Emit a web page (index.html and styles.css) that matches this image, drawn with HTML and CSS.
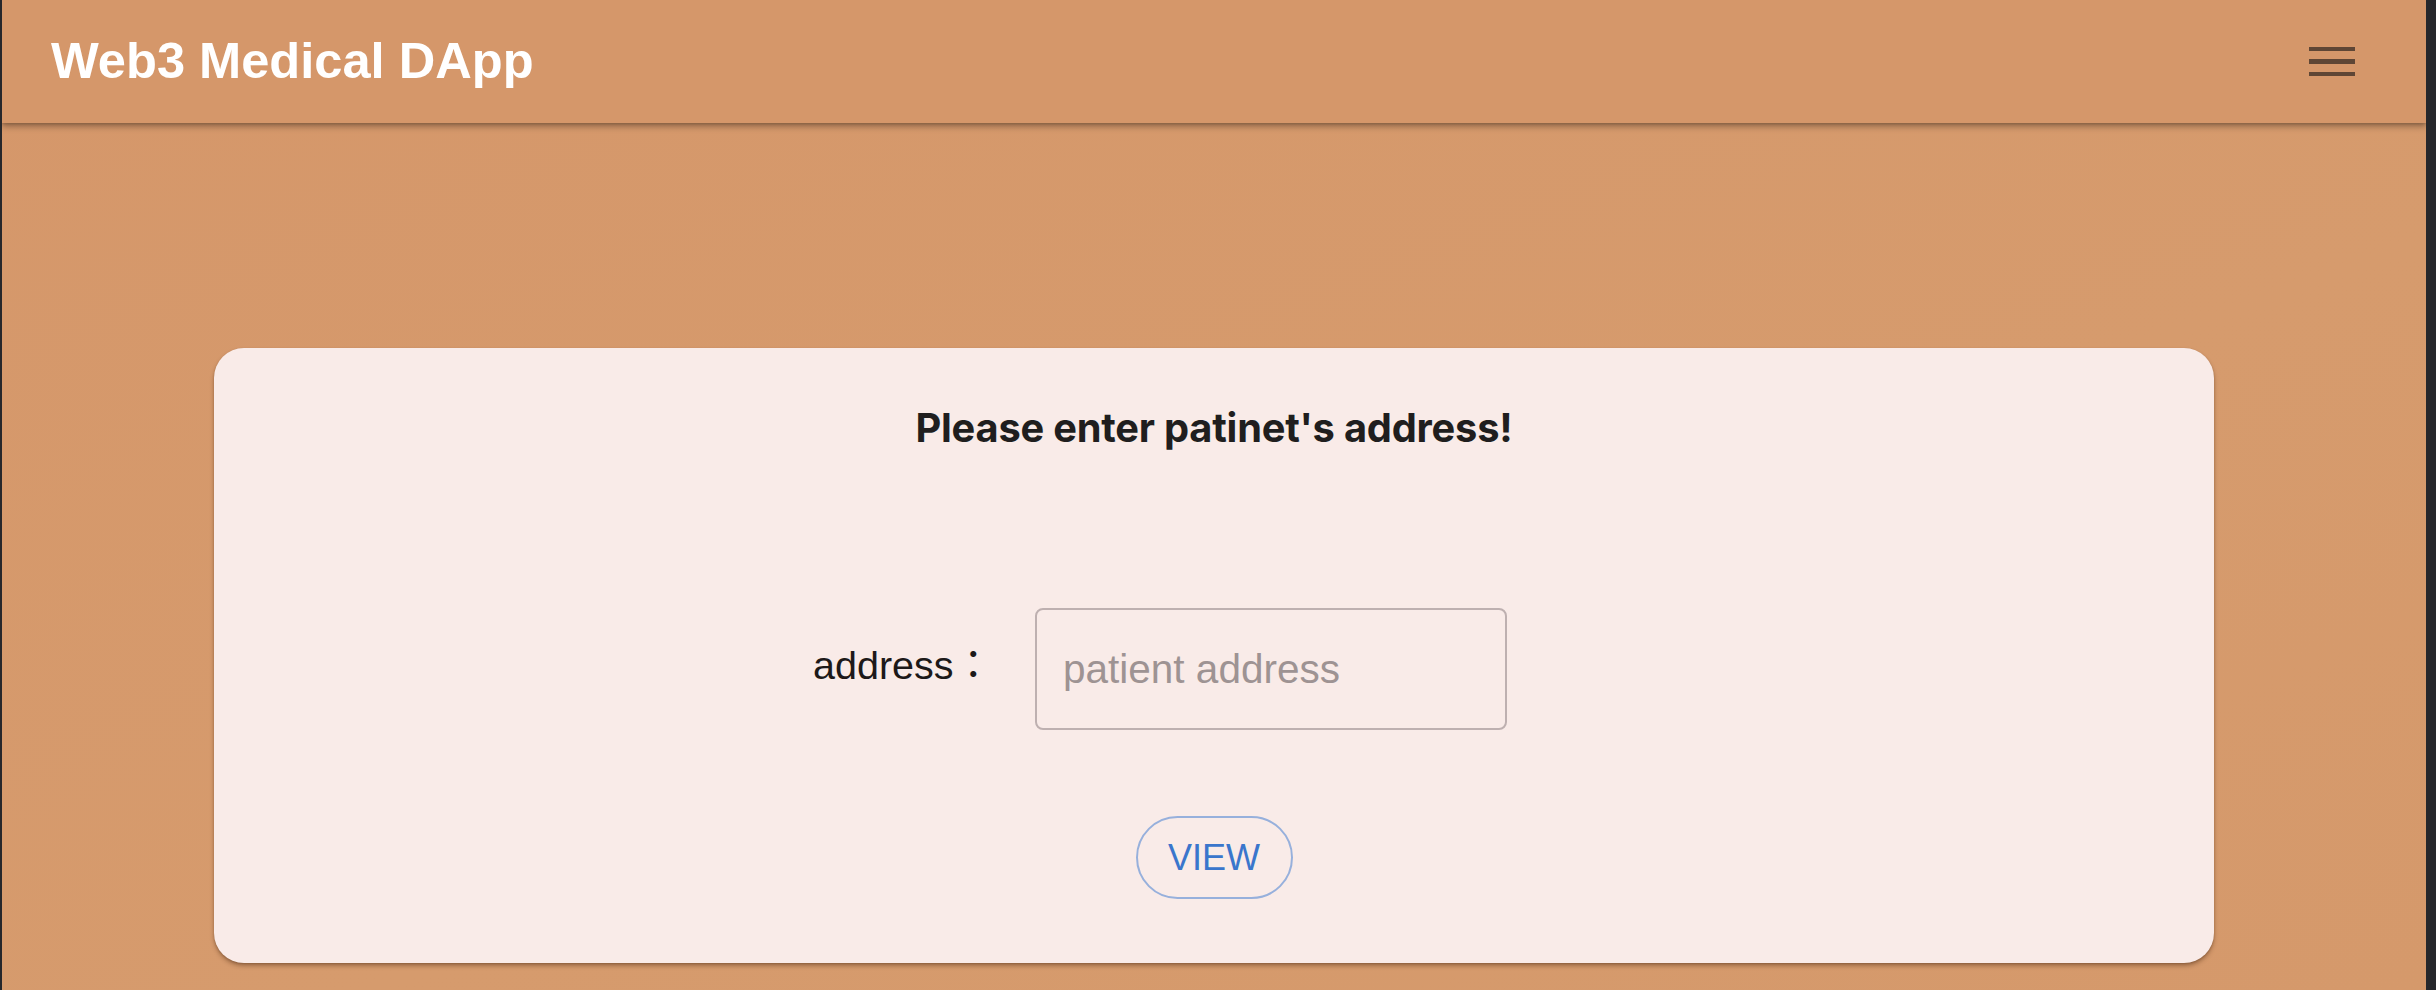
FILE: index.html
```html
<!DOCTYPE html>
<html lang="en">
<head>
<meta charset="utf-8">
<title>Web3 Medical DApp</title>
<link rel="stylesheet" href="styles.css">
</head>
<body>
<div class="app">
  <header class="appbar">
    <h1 class="brand">Web3 Medical DApp</h1>
    <button class="menu" aria-label="menu">
      <span class="bar"></span><span class="bar"></span><span class="bar"></span>
    </button>
  </header>
  <main class="content">
    <section class="card">
      <h2 class="card-title">Please enter patinet's address!</h2>
      <div class="form-row">
        <label class="field-label" for="addr">address<span class="colon">：</span></label>
        <input class="field-input" id="addr" type="text" placeholder="patient address">
      </div>
      <button class="view-btn">VIEW</button>
    </section>
  </main>
</div>
</body>
</html>
```
FILE: styles.css
```css
html, body {
  margin: 0;
  padding: 0;
  height: 100%;
}
body {
  background: #26272b;
  display: flex;
  font-family: "Liberation Sans", Arial, sans-serif;
}
.app {
  flex: 1;
  margin: 0 10px 0 2px;
  background: linear-gradient(160deg, #d5976a 0%, #d69b6d 60%, #d5996b 100%);
  display: flex;
  flex-direction: column;
  overflow: hidden;
}
.appbar {
  height: 123px;
  flex: none;
  background: #d5976a;
  display: flex;
  align-items: center;
  justify-content: space-between;
  padding: 0 71px 0 49px;
  box-shadow: 0 4px 6px rgba(0,0,0,0.28), 0 1px 3px rgba(0,0,0,0.18);
  position: relative;
  z-index: 1;
}
.brand {
  margin: 0;
  color: #ffffff;
  font-family: "Liberation Sans", Arial, sans-serif;
  font-weight: 700;
  font-size: 50.6px;
  line-height: 1;
}
.menu {
  background: none;
  border: 0;
  padding: 0;
  width: 46px;
  display: flex;
  flex-direction: column;
  gap: 8px;
  cursor: pointer;
}
.bar {
  display: block;
  height: 4.5px;
  background: #5f4635;
}
.content {
  flex: 1;
  padding: 225px 212px 0;
}
.card {
  background: #f9ebe8;
  border-radius: 30px;
  height: 615px;
  box-sizing: border-box;
  padding-top: 57px;
  display: flex;
  flex-direction: column;
  align-items: center;
  box-shadow: 0 3px 4px rgba(60,30,10,0.35), 0 1px 2px rgba(60,30,10,0.2);
}
.card-title {
  margin: 0;
  font-family: Inter, "Noto Sans", sans-serif;
  font-weight: 700;
  font-size: 39.8px;
  line-height: 46px;
  color: #201e1e;
  letter-spacing: -0.2px;
}
.form-row {
  margin-top: 157px;
  display: flex;
  align-items: flex-start;
  padding-right: 108px;
}
.field-label {
  font-family: "Liberation Sans", "Noto Sans CJK TC", sans-serif;
  font-size: 39.5px;
  line-height: 1;
  color: #1d1919;
  margin-top: 34px;
  margin-right: 42px;
}
.colon {
  font-family: "Noto Sans CJK TC", sans-serif;
}
.field-input {
  width: 472px;
  height: 122px;
  box-sizing: border-box;
  border: 2px solid #beb0b0;
  border-radius: 8px;
  background: transparent;
  padding: 0 0 0 26px;
  font-family: "Liberation Sans", Arial, sans-serif;
  font-size: 40.5px;
  color: #222;
  outline: none;
}
.field-input::placeholder {
  color: #9e9393;
}
.view-btn {
  margin-top: 86px;
  width: 157px;
  height: 83px;
  box-sizing: border-box;
  border: 2px solid #97b0dc;
  border-radius: 42px;
  background: transparent;
  color: #3a76cc;
  font-family: "Liberation Sans", Arial, sans-serif;
  font-size: 36px;
  padding: 0;
  cursor: pointer;
}
```
